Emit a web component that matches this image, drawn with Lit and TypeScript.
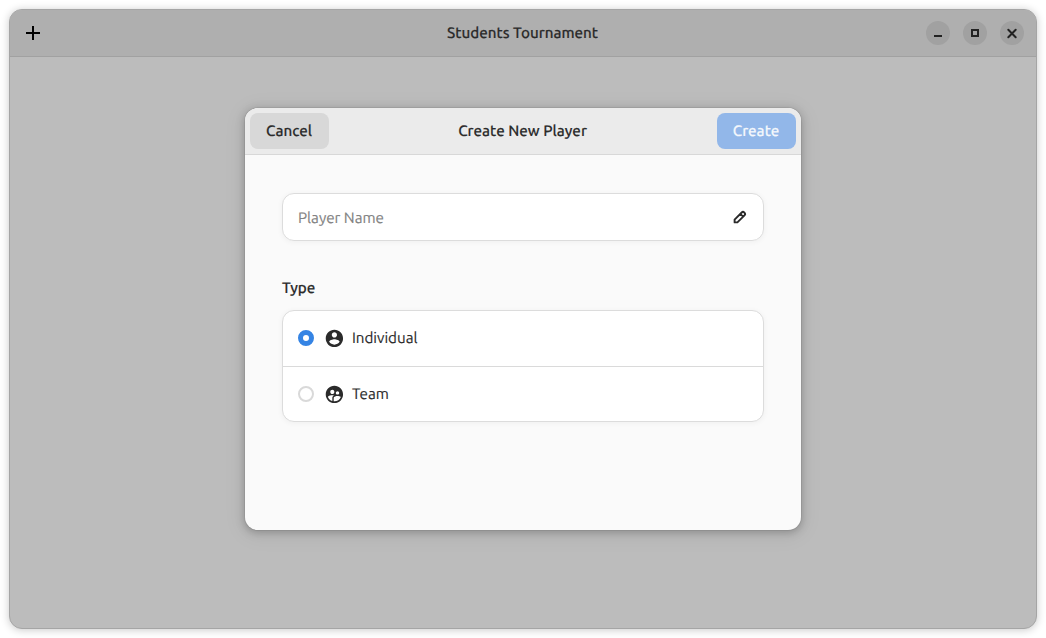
import { LitElement, html, css, svg } from "lit";
import { customElement, property, state } from "lit/decorators.js";
import { classMap } from "lit/directives/class-map.js";

const ICONS = {
  plus: svg`<path d="M8 1v14M1 8h14" stroke="#000" stroke-width="2" fill="none"/>`,
  minimize: svg`<path d="M4 10h8v2H4z"/>`,
  maximize: svg`<path d="M5 5h6v6H5z" stroke="currentColor" stroke-width="2" fill="none"/>`,
  close: svg`<path d="M4.3 4.8l7.4 7.4M11.7 4.8l-7.4 7.4" stroke="currentColor" stroke-width="2" stroke-linecap="round" fill="none"/>`,
  edit: svg`<path d="M2.6 13.4V10.6L9.7 3.5Q11 2.2 12.4 3.6T12.5 6.3L5.4 13.4ZM8.3 4.9l2.8 2.8" stroke="currentColor" stroke-width="1.9" stroke-linejoin="round" fill="none"/>`,
};

const PERSON = svg`<path d="M12 2C6.48 2 2 6.48 2 12s4.48 10 10 10 10-4.48 10-10S17.52 2 12 2zm0 3c1.66 0 3 1.34 3 3s-1.34 3-3 3-3-1.34-3-3 1.34-3 3-3zm0 14.2c-2.5 0-4.71-1.28-6-3.22.03-1.99 4-3.08 6-3.08 1.99 0 5.97 1.09 6 3.08-1.29 1.94-3.5 3.22-6 3.22z"/>`;
const GROUP = svg`<path d="M11.99 2c-5.52 0-10 4.48-10 10s4.48 10 10 10 10-4.48 10-10-4.48-10-10-10zm3.61 6.34c1.07 0 1.93.86 1.93 1.93 0 1.07-.86 1.93-1.93 1.93-1.07 0-1.93-.86-1.93-1.93-.01-1.07.86-1.93 1.93-1.93zm-6-1.58c1.3 0 2.36 1.06 2.36 2.36 0 1.3-1.06 2.36-2.36 2.36s-2.36-1.06-2.36-2.36c0-1.31 1.05-2.36 2.36-2.36zm0 9.13v3.75c-2.4-.75-4.3-2.6-5.14-4.96 1.05-1.12 3.67-1.69 5.14-1.69.53 0 1.2.08 1.9.22-1.64.87-1.9 2.02-1.9 2.68zM11.99 20c-.27 0-.53-.01-.79-.04v-4.07c0-1.42 2.94-2.13 4.4-2.13 1.07 0 2.92.39 3.84 1.15-1.17 2.97-4.06 5.09-7.45 5.09z"/>`;

@customElement("player-type-row")
export class PlayerTypeRow extends LitElement {
  @property() label = "";
  @property() kind = "";
  @property({ type: Boolean }) checked = false;

  static styles = css`
    :host { display: block; }
    .row { height: 100%; display: flex; align-items: center; padding-left: 15px; }
    .radio { box-sizing: border-box; width: 16px; height: 16px; border-radius: 50%; border: 2px solid #d9d9d9; }
    .radio.on { border: 5px solid #3584e4; background: #fff; }
    .icon { width: 20.8px; height: 20.8px; margin: 0 7.5px 0 9.6px; fill: #2b2b2b; }
    .label { white-space: nowrap; }
  `;

  render() {
    return html`<div class="row">
      <span class=${classMap({ radio: true, on: this.checked })}></span>
      <svg class="icon" viewBox="0 0 24 24">${this.kind === "team" ? GROUP : PERSON}</svg>
      <span class="label">${this.label}</span>
    </div>`;
  }
}

@customElement("app-root")
export class AppRoot extends LitElement {
  @state() private selected = "individual";

  static styles = css`
    :host {
      display: block; box-sizing: border-box; width: 1046px; height: 638px; padding: 9px;
      background: #fff; overflow: hidden; color: #2b2b2b; text-rendering: geometricPrecision;
      -webkit-text-stroke: 0.15px currentColor;
      font-family: Ubuntu, "Noto Sans", sans-serif; font-size: 15.2px; line-height: 20px;
    }
    .window {
      box-sizing: border-box; width: 1028px; height: 620px; border-radius: 13px;
      border: 1px solid #a5a5a5; background: #bcbcbc;
      box-shadow: 0 1px 9px rgba(0, 0, 0, 0.22); display: flex; flex-direction: column;
    }
    .bar { display: grid; grid-template-columns: 1fr auto 1fr; align-items: center; box-sizing: border-box; height: 47px; }
    .main-bar { background: #afafaf; border-bottom: 1px solid #a1a1a1; border-radius: 12px 12px 0 0; padding: 0 12px; flex: none; }
    .add { margin-left: 3px; }
    .title { font-weight: 500; white-space: nowrap; padding-right: 1px; }
    .icon { width: 16px; height: 16px; fill: currentColor; display: block; }
    .controls { justify-self: end; display: flex; gap: 13px; }
    .control { width: 24px; height: 24px; border-radius: 50%; background: #a1a1a1; display: grid; place-items: center; color: #222; }
    .content { flex: 1; display: flex; justify-content: center; align-items: flex-start; padding-top: 51px; }
    .dialog {
      width: 556px; height: 422px; border-radius: 13px; background: #fafafa; overflow: hidden;
      box-shadow: 0 0 0 1px rgba(0, 0, 0, 0.06), 0 2px 8px 1px rgba(0, 0, 0, 0.22), 0 3px 20px 6px rgba(0, 0, 0, 0.04);
    }
    .dialog-bar { background: #ebebeb; border-bottom: 1px solid #d8d8d8; padding: 0 5px; }
    .btn { box-sizing: border-box; width: 79px; height: 36px; border: 0; border-radius: 8px; font: inherit; font-weight: 500; text-rendering: inherit; padding: 0 1px 0 0; color: inherit; background: #d8d8d8; }
    .btn.suggested { justify-self: end; background: #92b7e9; color: #f4f7fc; }
    .form { padding: 38px 37px 0; }
    .card { box-sizing: border-box; background: #fff; border: 1px solid #dcdcdc; border-radius: 12px; box-shadow: 0 1px 5px 1px rgba(0, 0, 0, 0.035); }
    .entry { height: 48px; display: flex; align-items: center; justify-content: space-between; padding: 0 15px; }
    .placeholder { color: #828282; padding-top: 1px; }
    .heading { font-weight: 500; margin: 37px 0 12px; }
    .list { height: 112px; overflow: hidden; display: grid; grid-template-rows: 56px 54px; }
    .first { border-bottom: 1px solid #dadada; padding-bottom: 1px; }
  `;

  private control(name: "minimize" | "maximize" | "close") {
    return html`<div class="control"><svg class="icon" viewBox="0 0 16 16">${ICONS[name]}</svg></div>`;
  }

  private pick(kind: string) {
    this.selected = kind;
  }

  render() {
    return html`<div class="window">
      <div class="bar main-bar">
        <svg class="icon add" viewBox="0 0 16 16">${ICONS.plus}</svg>
        <span class="title">Students Tournament</span>
        <div class="controls">${this.control("minimize")}${this.control("maximize")}${this.control("close")}</div>
      </div>
      <div class="content">
        <div class="dialog">
          <div class="bar dialog-bar">
            <button class="btn">Cancel</button>
            <span class="title">Create New Player</span>
            <button class="btn suggested">Create</button>
          </div>
          <div class="form">
            <div class="card entry">
              <span class="placeholder">Player Name</span>
              <svg class="icon" viewBox="0 0 16 16">${ICONS.edit}</svg>
            </div>
            <div class="heading">Type</div>
            <div class="card list">
              <player-type-row class="first" label="Individual" kind="individual" ?checked=${this.selected === "individual"} @click=${() => this.pick("individual")}></player-type-row>
              <player-type-row label="Team" kind="team" ?checked=${this.selected === "team"} @click=${() => this.pick("team")}></player-type-row>
            </div>
          </div>
        </div>
      </div>
    </div>`;
  }
}
